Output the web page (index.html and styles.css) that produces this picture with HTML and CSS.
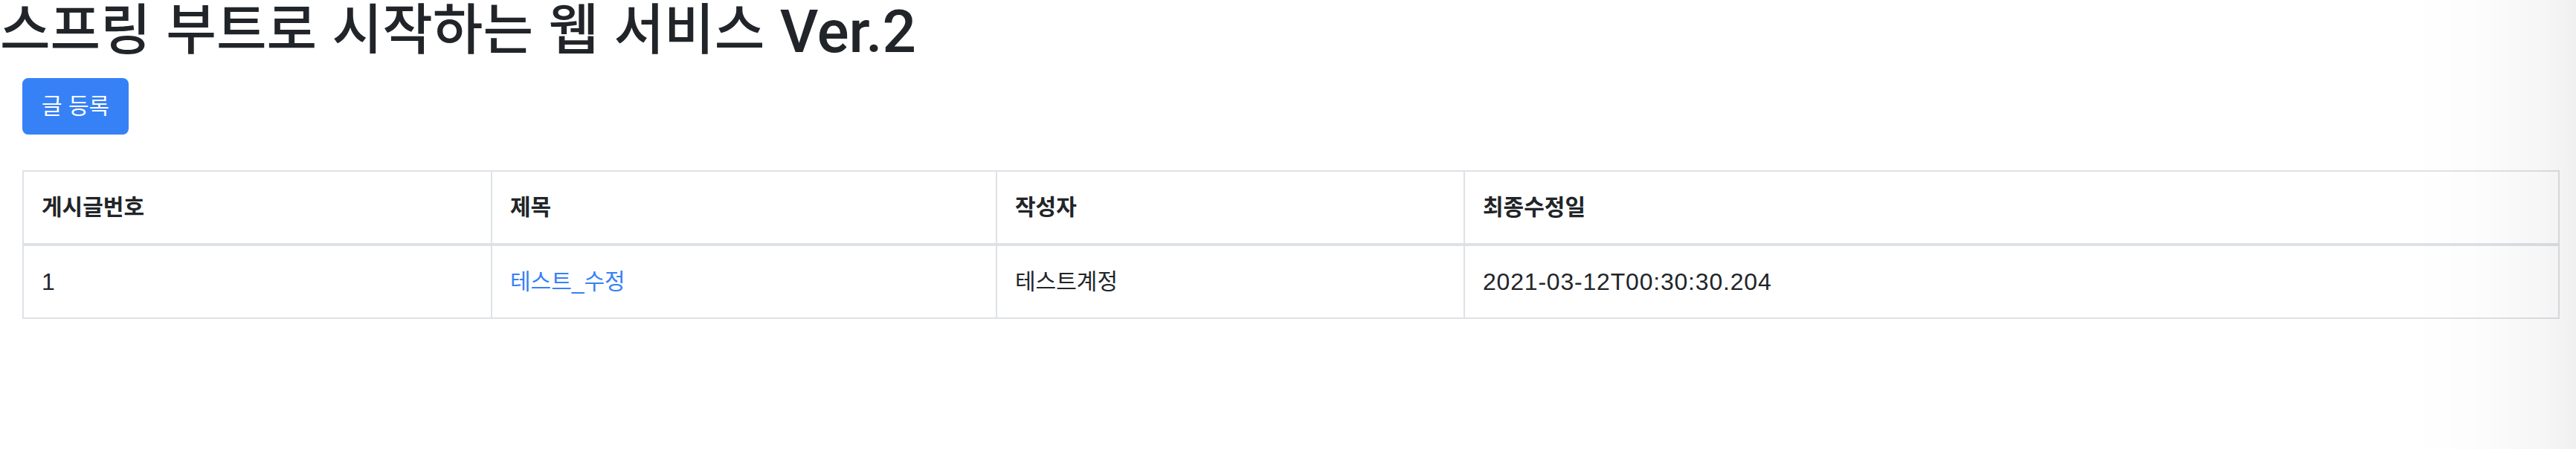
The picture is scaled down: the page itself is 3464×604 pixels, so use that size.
FILE: index.html
```html
<!DOCTYPE html>
<html lang="ko">
<head>
<meta charset="utf-8">
<title>스프링 부트로 시작하는 웹 서비스 Ver.2</title>
<link rel="stylesheet" href="styles.css">
</head>
<body>
<h1 class="title">스프링 부트로 시작하는 웹 서비스 <span class="latin">Ver.2</span></h1>
<div class="container">
  <button class="btn" type="button">글 등록</button>
  <table class="board">
    <colgroup>
      <col class="c1">
      <col class="c2">
      <col class="c3">
      <col>
    </colgroup>
    <thead>
      <tr>
        <th class="ko">게시글번호</th>
        <th class="ko">제목</th>
        <th class="ko">작성자</th>
        <th class="ko">최종수정일</th>
      </tr>
    </thead>
    <tbody>
      <tr>
        <td class="num">1</td>
        <td class="ko"><a class="link" href="#">테스트_수정</a></td>
        <td class="ko">테스트계정</td>
        <td class="num">2021-03-12T00:30:30.204</td>
      </tr>
    </tbody>
  </table>
</div>
<div class="edge-shade"></div>
</body>
</html>
```
FILE: styles.css
```css
html, body {
  margin: 0;
  padding: 0;
  background: #ffffff;
}
body {
  font-family: "Liberation Sans", "Noto Sans CJK KR", sans-serif;
  color: #212529;
  font-size: 32px;
  line-height: 48px;
}
.title {
  margin: 0 0 22px 0;
  font-size: 73.5px;
  line-height: 82px;
  font-weight: 500;
  color: #212529;
}
.title .latin {
  font-family: Roboto, "Liberation Sans", sans-serif;
  font-weight: 500;
  font-size: 80px;
  line-height: 1;
  vertical-align: -4px;
}
.container {
  padding: 0 22px 0 30px;
}
.btn {
  display: block;
  margin: 0 0 48px 0;
  padding: 12px 24px;
  border: 2px solid #3781f6;
  border-radius: 8px;
  background: #3781f6;
  color: #ffffff;
  font-family: "Liberation Sans", "Noto Sans CJK KR", sans-serif;
  font-size: 30px;
  line-height: 48px;
  font-weight: 400;
}
.board {
  width: 100%;
  border-collapse: collapse;
  table-layout: fixed;
}
.board .c1 { width: 630px; }
.board .c2 { width: 679px; }
.board .c3 { width: 629px; }
.board th,
.board td {
  border: 2px solid #dee2e6;
  padding: 24px;
  font-size: 32px;
  line-height: 48px;
  text-align: left;
  vertical-align: top;
}
.board thead th {
  border-bottom-width: 4px;
  vertical-align: bottom;
  font-weight: 700;
}
.board .ko {
  font-size: 30px;
}
.board .num {
  letter-spacing: 0.8px;
}
.link {
  color: #3781f6;
  text-decoration: none;
}
.edge-shade {
  position: fixed;
  top: 0;
  right: 0;
  width: 220px;
  height: 100%;
  pointer-events: none;
  background: linear-gradient(to right, rgba(0,0,0,0) 0%, rgba(0,0,0,0.012) 45%, rgba(0,0,0,0.035) 80%, rgba(0,0,0,0.06) 100%);
}
```
